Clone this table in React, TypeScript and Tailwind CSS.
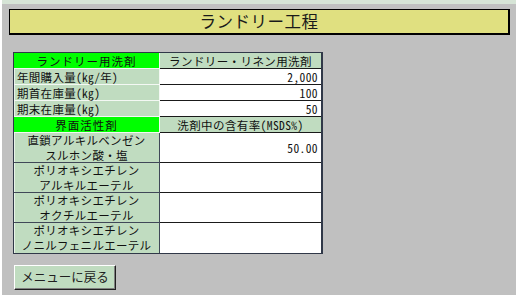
import React from 'react';

type Row = {
  label: string[];
  value?: string;
  kind: 'header' | 'item' | 'multi';
};

const rows: Row[] = [
  { label: ['ランドリー用洗剤'], value: 'ランドリー・リネン用洗剤', kind: 'header' },
  { label: ['年間購入量(kg/年)'], value: '2,000', kind: 'item' },
  { label: ['期首在庫量(kg)'], value: '100', kind: 'item' },
  { label: ['期末在庫量(kg)'], value: '50', kind: 'item' },
  { label: ['界面活性剤'], value: '洗剤中の含有率(MSDS%)', kind: 'header' },
  { label: ['直鎖アルキルベンゼン', 'スルホン酸・塩'], value: '50.00', kind: 'multi' },
  { label: ['ポリオキシエチレン', 'アルキルエーテル'], kind: 'multi' },
  { label: ['ポリオキシエチレン', 'オクチルエーテル'], kind: 'multi' },
  { label: ['ポリオキシエチレン', 'ノニルフェニルエーテル'], kind: 'multi' },
];

const font = "font-['Noto_Sans_Mono_CJK_JP','Noto_Sans_CJK_JP',sans-serif]";

const TableRow: React.FC<{ row: Row; last: boolean }> = ({ row, last }) => {
  const isHeader = row.kind === 'header';
  const isMulti = row.kind === 'multi';
  const height = isMulti ? 'h-[30px]' : 'h-[16px]';
  const labelBorder = isMulti || last ? 'border-[#1a1a1a]' : 'border-[#f4f8f4]';
  const valueBorder = last ? 'border-transparent' : 'border-[#1a1a1a]';

  return (
    <div className={`flex ${height}`}>
      <div
        className={`w-[146px] border-r border-[#404858] border-b ${last ? 'border-b-0' : ''} ${labelBorder} ${
          isHeader ? 'bg-[#00ff00]' : 'bg-[#c0dcc0] shadow-[inset_1px_0_0_#e8f2e8]'
        } flex flex-col ${isHeader || isMulti ? 'items-center' : 'items-start pl-[3px]'} justify-center text-[11.5px] ${
          isMulti ? 'leading-[15px]' : 'leading-[14px]'
        } text-[#101010] tracking-[0.3px]`}
      >
        {row.label.map(line => (
          <span key={line} className={isHeader ? 'tracking-[1px]' : ''}>{line}</span>
        ))}
      </div>
      <div
        className={`w-[161px] border-b ${last ? 'border-b-0' : ''} ${valueBorder} ${
          isHeader ? 'bg-[#c0dcc0] justify-center' : 'bg-white justify-end pr-[3px]'
        } flex items-center text-[11.5px] leading-[14px] text-[#101010] tracking-[0.4px]`}
      >
        {row.value}
      </div>
    </div>
  );
};

export default function App() {
  return (
    <div className={`w-[521px] h-[295px] bg-white overflow-hidden ${font}`}>
      <div className="ml-[2px] w-[514px] h-[295px] bg-[#c0c0c0] border-t-[4px] border-[#d6e4d6]">
        <div className="ml-[7px] mt-[5px] w-[501px] h-[26px] bg-[#e0e080] border border-black border-r-2 border-b-2 flex items-center justify-center">
          <span className="text-[16.5px] leading-none text-[#1a1a1a] tracking-[0.5px] font-['Noto_Sans_CJK_JP',sans-serif]">
            ランドリー工程
          </span>
        </div>

        <div className="ml-[11px] mt-[17px] w-[310px] border border-[#303848] border-r-2">
          {rows.map((row, i) => (
            <TableRow key={i} row={row} last={i === rows.length - 1} />
          ))}
        </div>

        <button
          type="button"
          className="ml-[12px] mt-[11px] w-[102px] h-[25px] bg-[#c0dcc0] border border-t-white border-l-white border-r-[#202020] border-b-[#202020] shadow-[inset_-1px_-1px_0_#808080] text-[12.5px] text-[#202020] font-['Noto_Sans_CJK_JP',sans-serif] flex items-center justify-center"
        >
          メニューに戻る
        </button>
      </div>
    </div>
  );
}
